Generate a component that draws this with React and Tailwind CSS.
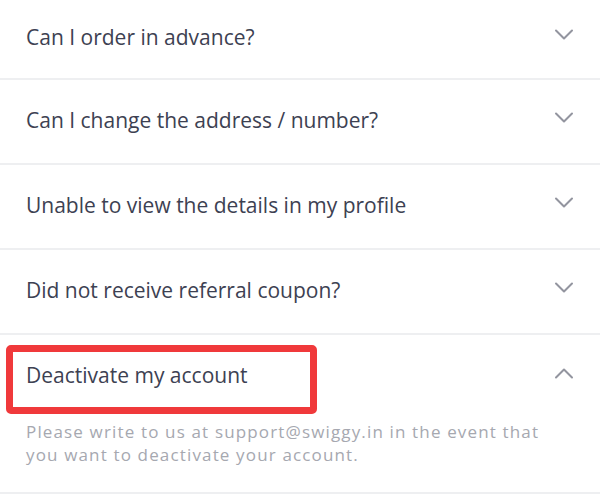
import React from "react";

const Chevron = ({ up }) => (
  <svg width="20" height="12" viewBox="0 0 20 12" className="shrink-0">
    <path
      d={up ? "M2 10.5 L10 2.5 L18 10.5" : "M2 1.5 L10 9.5 L18 1.5"}
      fill="none"
      stroke="#93959f"
      strokeWidth="2"
      strokeLinecap="round"
      strokeLinejoin="round"
    />
  </svg>
);

const Row = ({ q, first }) => (
  <div
    className={`flex items-center justify-between border-b-2 border-[#eeeff1] pl-[26px] pr-[26px] ${
      first ? "h-[80px]" : "h-[85px]"
    }`}
  >
    <span className="text-[21px] text-[#3d4152] -mt-[2px]">{q}</span>
    <div className="-mt-[8px]">
      <Chevron />
    </div>
  </div>
);

export default function App() {
  return (
    <div
      className="w-[600px] h-[496px] bg-white overflow-hidden"
      style={{ fontFamily: "'Open Sans', Lato, sans-serif" }}
    >
      <Row first q="Can I order in advance?" />
      <Row q="Can I change the address / number?" />
      <Row q="Unable to view the details in my profile" />
      <Row q="Did not receive referral coupon?" />
      <div className="relative border-b-2 border-[#eeeff1] h-[159px]">
        <div className="flex items-center justify-between h-[84px] pl-[26px] pr-[26px]">
          <span className="text-[21px] text-[#3d4152] -mt-[2px]">Deactivate my account</span>
          <div className="-mt-[8px]">
            <Chevron up />
          </div>
        </div>
        <p className="pl-[26px] pr-[40px] text-[17px] leading-[23px] tracking-[1.15px] text-[#a6a8b0] mt-[1px]">
          Please write to us at support@swiggy.in in the event that you want to
          deactivate your account.
        </p>
        <div className="absolute left-[6px] top-[10px] w-[311px] h-[69px] border-[7px] border-[#f0393b] rounded-[5px]" />
      </div>
    </div>
  );
}
